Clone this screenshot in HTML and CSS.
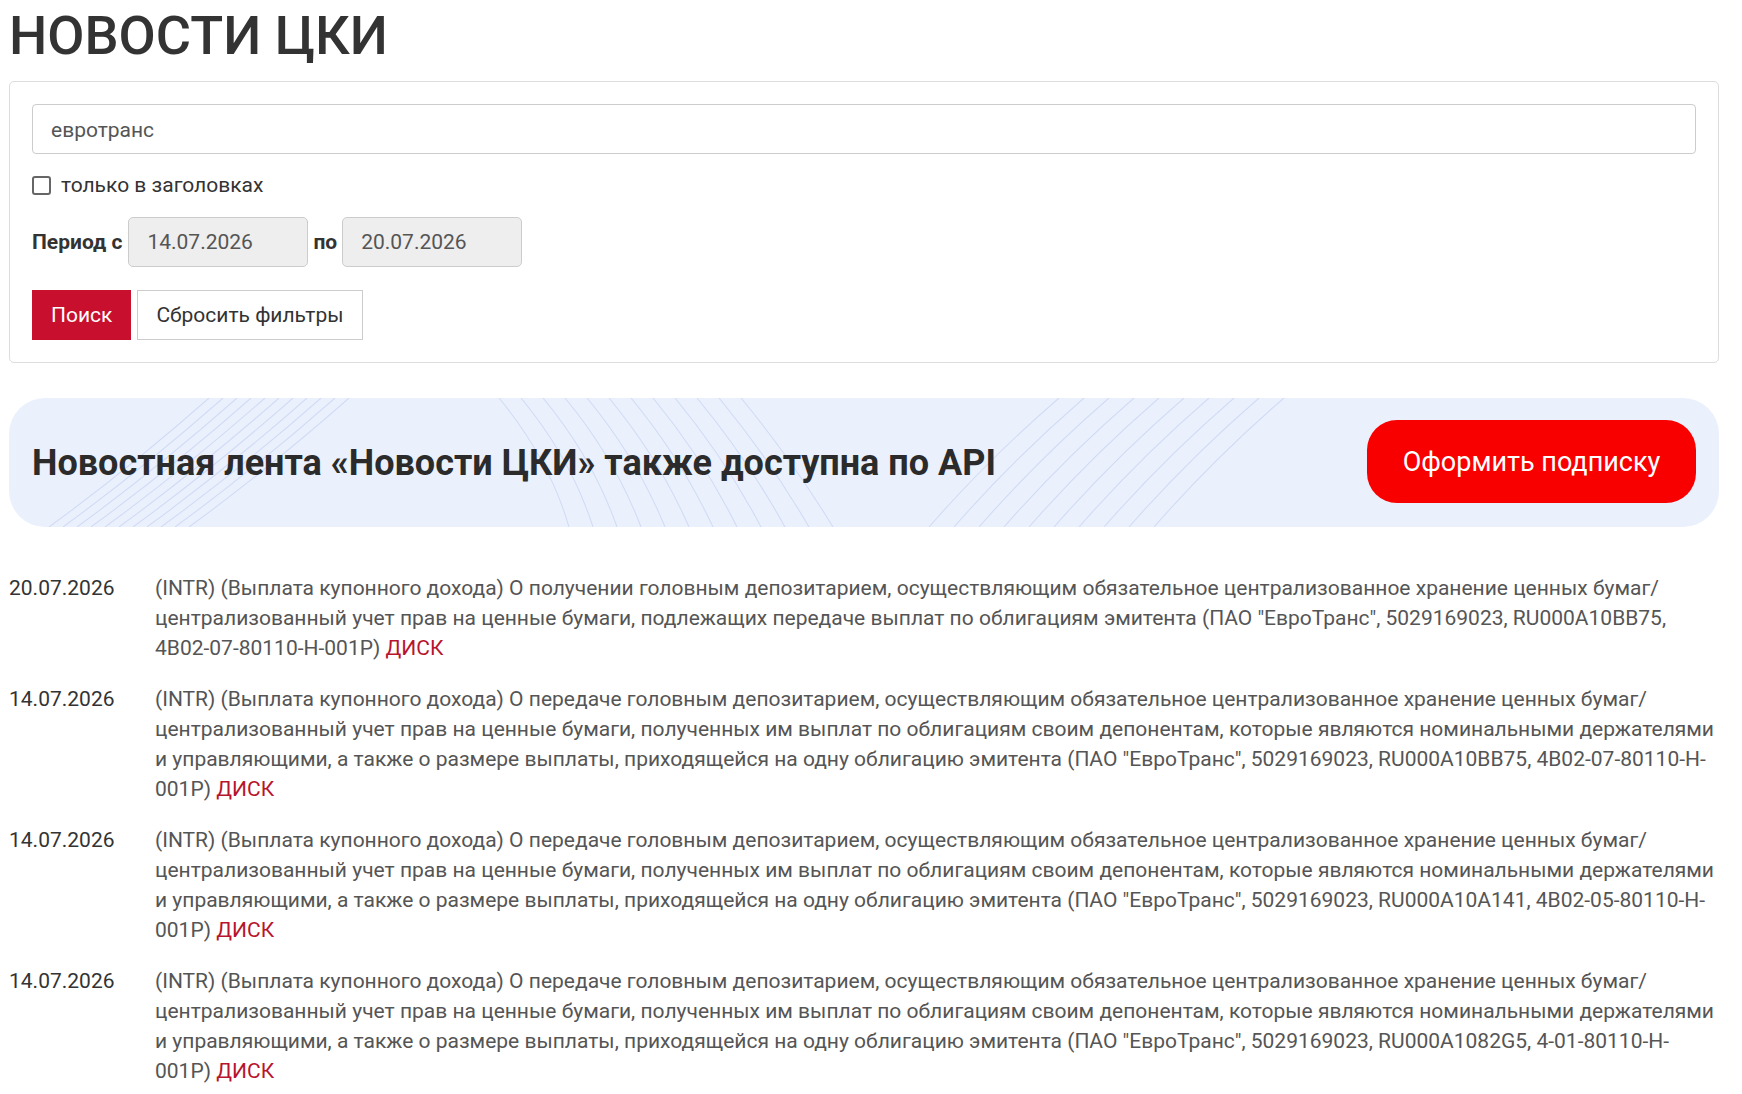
FILE: index.html
```html
<!DOCTYPE html>
<html lang="ru">
  <head>
    <meta charset="UTF-8" />
    <meta name="viewport" content="width=device-width, initial-scale=1.0" />
    <title>Новости ЦКИ</title>
    <link rel="stylesheet" href="styles.css">
  </head>
  <body>
    <div class="page">
      <h1 class="page-title">НОВОСТИ ЦКИ</h1>

      <form class="filter" id="newsFilter">
        <input class="filter-query" type="text" name="q" value="евротранс" />

        <label class="filter-check">
          <input type="checkbox" name="titles" />
          <span>только в заголовках</span>
        </label>

        <div class="filter-period">
          <span class="period-label">Период с</span>
          <input class="date-input" type="text" name="from" value="14.07.2026" readonly />
          <span class="period-label">по</span>
          <input class="date-input" type="text" name="to" value="20.07.2026" readonly />
        </div>

        <div class="filter-actions">
          <button type="submit" class="btn btn-search">Поиск</button>
          <button type="reset" class="btn btn-reset">Сбросить фильтры</button>
        </div>
      </form>

      <section class="api-banner">
        <svg class="api-banner-lines" viewBox="0 0 1710 128" preserveAspectRatio="none" aria-hidden="true">
          <g fill="none" stroke="#d0daf5" stroke-width="1">
            <!-- left fan -->
            <path d="M40 128 Q120 70 200 0" />
            <path d="M54 128 Q134 70 214 0" />
            <path d="M68 128 Q148 70 228 0" />
            <path d="M82 128 Q162 70 242 0" />
            <path d="M96 128 Q176 70 256 0" />
            <path d="M110 128 Q190 70 270 0" />
            <path d="M124 128 Q204 70 284 0" />
            <path d="M138 128 Q218 70 298 0" />
            <path d="M152 128 Q232 70 312 0" />
            <path d="M166 128 Q246 70 326 0" />
            <path d="M180 128 Q260 70 340 0" />
            <!-- middle rings -->
            <path d="M490 0 Q540 60 560 128" />
            <path d="M512 0 Q562 60 584 128" />
            <path d="M534 0 Q584 60 608 128" />
            <path d="M556 0 Q606 60 632 128" />
            <path d="M578 0 Q628 60 656 128" />
            <path d="M600 0 Q650 60 680 128" />
            <path d="M622 0 Q672 60 704 128" />
            <path d="M644 0 Q694 60 728 128" />
            <path d="M666 0 Q716 60 752 128" />
            <path d="M688 0 Q738 60 776 128" />
            <path d="M710 0 Q760 60 800 128" />
            <path d="M732 0 Q782 60 824 128" />
            <!-- right fan -->
            <path d="M920 128 Q980 60 1050 0" />
            <path d="M945 128 Q1005 60 1075 0" />
            <path d="M970 128 Q1030 60 1100 0" />
            <path d="M995 128 Q1055 60 1125 0" />
            <path d="M1020 128 Q1080 60 1150 0" />
            <path d="M1045 128 Q1105 60 1175 0" />
            <path d="M1070 128 Q1130 60 1200 0" />
            <path d="M1095 128 Q1155 60 1225 0" />
            <path d="M1120 128 Q1180 60 1250 0" />
            <path d="M1145 128 Q1205 60 1275 0" />
          </g>
        </svg>
        <h2 class="api-banner-title">Новостная лента «Новости ЦКИ» также доступна по API</h2>
        <a class="api-banner-btn" href="#">Оформить подписку</a>
      </section>

      <ul class="news">
        <li class="news-item">
          <span class="news-date">20.07.2026</span>
          <p class="news-text">(INTR) (Выплата купонного дохода) О получении головным депозитарием, осуществляющим обязательное централизованное хранение ценных бумаг/централизованный учет прав на ценные бумаги, подлежащих передаче выплат по облигациям эмитента (ПАО "ЕвроТранс", 5029169023, RU000A10BB75, 4B02-07-80110-H-001P) <a href="#" class="news-src">ДИСК</a></p>
        </li>
        <li class="news-item">
          <span class="news-date">14.07.2026</span>
          <p class="news-text">(INTR) (Выплата купонного дохода) О передаче головным депозитарием, осуществляющим обязательное централизованное хранение ценных бумаг/централизованный учет прав на ценные бумаги, полученных им выплат по облигациям своим депонентам, которые являются номинальными держателями и управляющими, а также о размере выплаты, приходящейся на одну облигацию эмитента (ПАО "ЕвроТранс", 5029169023, RU000A10BB75, 4B02-07-80110-H-001P) <a href="#" class="news-src">ДИСК</a></p>
        </li>
        <li class="news-item">
          <span class="news-date">14.07.2026</span>
          <p class="news-text">(INTR) (Выплата купонного дохода) О передаче головным депозитарием, осуществляющим обязательное централизованное хранение ценных бумаг/централизованный учет прав на ценные бумаги, полученных им выплат по облигациям своим депонентам, которые являются номинальными держателями и управляющими, а также о размере выплаты, приходящейся на одну облигацию эмитента (ПАО "ЕвроТранс", 5029169023, RU000A10A141, 4B02-05-80110-H-001P) <a href="#" class="news-src">ДИСК</a></p>
        </li>
        <li class="news-item">
          <span class="news-date">14.07.2026</span>
          <p class="news-text">(INTR) (Выплата купонного дохода) О передаче головным депозитарием, осуществляющим обязательное централизованное хранение ценных бумаг/централизованный учет прав на ценные бумаги, полученных им выплат по облигациям своим депонентам, которые являются номинальными держателями и управляющими, а также о размере выплаты, приходящейся на одну облигацию эмитента (ПАО "ЕвроТранс", 5029169023, RU000A1082G5, 4-01-80110-H-001P) <a href="#" class="news-src">ДИСК</a></p>
        </li>
      </ul>
    </div>
  </body>
</html>
```

FILE: styles.css
```css
body {
  font-family: Roboto, "Noto Sans", Arial, sans-serif;
  background-color: #fff;
  color: #333;
  margin: 0;
  padding: 0;
}
.page {
  width: 1710px;
  margin-left: 9px;
}
.page-title {
  margin: 3px 0 12px;
  font-size: 54px;
  line-height: 66px;
  font-weight: 500;
  color: #333;
}

/* filter form */
.filter {
  display: flex;
  flex-direction: column;
  align-items: flex-start;
  padding: 22px;
  border: 1px solid #ddd;
  border-radius: 5px;
}
.filter-query {
  box-sizing: border-box;
  width: 100%;
  height: 50px;
  padding: 2px 18px 0;
  font-family: inherit;
  font-size: 21px;
  color: #555;
  border: 1px solid #ccc;
  border-radius: 4px;
}
.filter-check {
  display: flex;
  align-items: center;
  gap: 10px;
  margin-top: 20px;
  font-size: 21px;
  color: #333;
  line-height: 22px;
}
.filter-check input {
  appearance: none;
  width: 19px;
  height: 19px;
  margin: 0;
  border: 2px solid #666;
  border-radius: 3px;
}
.filter-period {
  display: flex;
  align-items: center;
  gap: 5px;
  margin-top: 21px;
}
.period-label {
  font-size: 21px;
  font-weight: 700;
  color: #333;
}
.period-label:first-child {
  margin-right: 1px;
}
.date-input {
  box-sizing: border-box;
  width: 180px;
  height: 50px;
  padding: 0 18px;
  font-family: inherit;
  font-size: 21px;
  color: #555;
  background-color: #eee;
  border: 1px solid #ccc;
  border-radius: 5px;
}
.filter-actions {
  display: flex;
  gap: 6px;
  margin-top: 23px;
}
.btn {
  height: 50px;
  padding: 0 19px;
  font-family: inherit;
  font-size: 21px;
  border-radius: 0;
  cursor: pointer;
}
.btn-search {
  background-color: #c8102e;
  color: #fff;
  border: none;
}
.btn-reset {
  padding: 0 18px;
  background-color: #fff;
  color: #333;
  border: 1px solid #ccc;
}

/* API banner */
.api-banner {
  position: relative;
  display: flex;
  align-items: center;
  justify-content: space-between;
  height: 129px;
  margin-top: 35px;
  padding: 0 23px 0 23px;
  background-color: #eaf0fc;
  border-radius: 36px;
  overflow: hidden;
}
.api-banner-lines {
  position: absolute;
  top: 0;
  left: 0;
  width: 100%;
  height: 100%;
}
.api-banner-title {
  position: relative;
  margin: 0;
  font-size: 36px;
  font-weight: 700;
  color: #2b2b2b;
}
.api-banner-btn {
  position: relative;
  display: flex;
  align-items: center;
  justify-content: center;
  width: 329px;
  height: 83px;
  margin-bottom: 2px;
  background-color: #f80000;
  color: #fff;
  font-size: 27px;
  text-decoration: none;
  border-radius: 30px;
}

/* news list */
.news {
  list-style: none;
  margin: 46px 0 0;
  padding: 0;
}
.news-item {
  display: flex;
  margin-bottom: 21px;
  font-size: 21px;
  line-height: 30px;
}
.news-date {
  flex: 0 0 146px;
  color: #333;
}
.news-text {
  flex: 1;
  margin: 0;
  color: #555;
}
.news-src {
  color: #b8142d;
  text-decoration: none;
}
```
